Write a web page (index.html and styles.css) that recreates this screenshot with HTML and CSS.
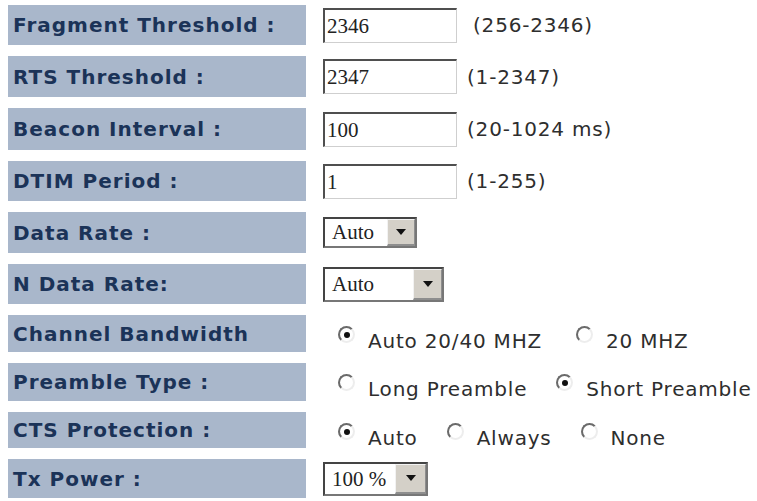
FILE: index.html
```html
<!DOCTYPE html>
<html lang="en">
<head>
  <meta charset="UTF-8">
  <title>Advanced Wireless Settings</title>
  <link rel="stylesheet" href="styles.css">
</head>
<body>
  <div class="settings">
    <div class="label">Fragment Threshold :</div>
    <div class="field">
      <span class="textbox">2346</span><span class="hint first">(256-2346)</span>
    </div>

    <div class="label">RTS Threshold :</div>
    <div class="field">
      <span class="textbox">2347</span><span class="hint">(1-2347)</span>
    </div>

    <div class="label">Beacon Interval :</div>
    <div class="field">
      <span class="textbox">100</span><span class="hint">(20-1024 ms)</span>
    </div>

    <div class="label">DTIM Period :</div>
    <div class="field">
      <span class="textbox">1</span><span class="hint">(1-255)</span>
    </div>

    <div class="label">Data Rate :</div>
    <div class="field">
      <span class="select rate"><span class="value">Auto</span><span class="arrow"></span></span>
    </div>

    <div class="label">N Data Rate:</div>
    <div class="field">
      <span class="select nrate"><span class="value">Auto</span><span class="arrow"></span></span>
    </div>

    <div class="label">Channel Bandwidth</div>
    <div class="field choices wide">
      <span class="opt"><span class="radio checked"></span><span class="text">Auto 20/40 MHZ</span></span>
      <span class="opt"><span class="radio"></span><span class="text">20 MHZ</span></span>
    </div>

    <div class="label">Preamble Type :</div>
    <div class="field choices">
      <span class="opt"><span class="radio"></span><span class="text">Long Preamble</span></span>
      <span class="opt"><span class="radio checked"></span><span class="text">Short Preamble</span></span>
    </div>

    <div class="label">CTS Protection :</div>
    <div class="field choices">
      <span class="opt"><span class="radio checked"></span><span class="text">Auto</span></span>
      <span class="opt"><span class="radio"></span><span class="text">Always</span></span>
      <span class="opt"><span class="radio"></span><span class="text">None</span></span>
    </div>

    <div class="label">Tx Power :</div>
    <div class="field">
      <span class="select power"><span class="value">100 %</span><span class="arrow"></span></span>
    </div>
  </div>
</body>
</html>
```

FILE: styles.css
```css
* { margin: 0; padding: 0; box-sizing: border-box; }

body {
  background: #fff;
  padding: 5px 0 0 8px;
  font-family: "DejaVu Sans", Verdana, sans-serif;
  color: #333;
}

/* two columns: shaded label cell + control cell */
.settings {
  display: grid;
  grid-template-columns: 298px 1fr;
  grid-template-rows: 40px 41px 42px 40px 41px 40px 37px 38px 36px 39px;
  column-gap: 17px;
  row-gap: 11px;
}

.label {
  display: flex;
  align-items: center;
  padding-left: 5px;
  background: #a9b7cb;
  color: #1b3358;
  font-weight: bold;
  font-size: 20px;
  letter-spacing: 1px;
  white-space: nowrap;
}

.field {
  display: flex;
  align-items: center;
  white-space: nowrap;
}

/* sunken text box */
.textbox {
  width: 134px;
  height: 35px;
  padding: 4px 0 0 2px;
  background: #fff;
  border-style: solid;
  border-width: 2px 1px 1px 2px;
  border-color: #4f4f4f #cfcfcf #cfcfcf #4f4f4f;
  font-family: "Liberation Serif", "Times New Roman", serif;
  font-size: 21px;
  line-height: 24px;
  color: #222;
}

.hint {
  margin-left: 10px;
  font-size: 20px;
  letter-spacing: 0.8px;
  color: #2e2e2e;
}
.hint.first { margin-left: 16px; }

/* drop-down list */
.select {
  display: flex;
  align-items: stretch;
  background: #fff;
  border-style: solid;
  border-width: 2px;
  border-color: #444 #777 #777 #444;
}
.select .value {
  flex: 1;
  padding-left: 7px;
  font-family: "Liberation Serif", "Times New Roman", serif;
  font-size: 21px;
  line-height: 27px;
  color: #222;
}
.select .arrow {
  position: relative;
  background: #d4d0c8;
  border-left: 1px solid #f2f2f2;
  border-top: 1px solid #f2f2f2;
  border-bottom: 2px solid #8e8e8e;
  border-right: 1px solid #8e8e8e;
}
.select .arrow::after {
  content: "";
  position: absolute;
  left: 50%;
  top: 50%;
  margin: -3px 0 0 -5px;
  border-left: 5px solid transparent;
  border-right: 5px solid transparent;
  border-top: 6px solid #111;
}
.select.rate  { width: 94px;  height: 31px; }
.select.rate .arrow  { width: 28px; }
.select.nrate { width: 121px; height: 35px; }
.select.nrate .arrow { width: 29px; }
.select.nrate .value { line-height: 31px; }
.select.power { width: 105px; height: 34px; }
.select.power .arrow { width: 31px; }
.select.power .value { line-height: 30px; }

/* radio groups */
.choices {
  align-items: flex-start;
  padding: 11px 0 0 15px;
  gap: 29px;
}
.choices.wide { gap: 34px; }

.opt {
  display: inline-flex;
  align-items: flex-start;
}
.radio {
  position: relative;
  width: 17px;
  height: 17px;
  margin-right: 13px;
  border-radius: 50%;
  border: 2px solid;
  border-color: #6a6a6a #ededed #ededed #6a6a6a;
  background: #fff;
}
.radio.checked::after {
  content: "";
  position: absolute;
  left: 3.5px;
  top: 3.5px;
  width: 6px;
  height: 6px;
  border-radius: 50%;
  background: #111;
}
.opt .text {
  margin-top: 3px;
  font-size: 20px;
  line-height: 24px;
  letter-spacing: 0.8px;
  color: #2e2e2e;
}
```
